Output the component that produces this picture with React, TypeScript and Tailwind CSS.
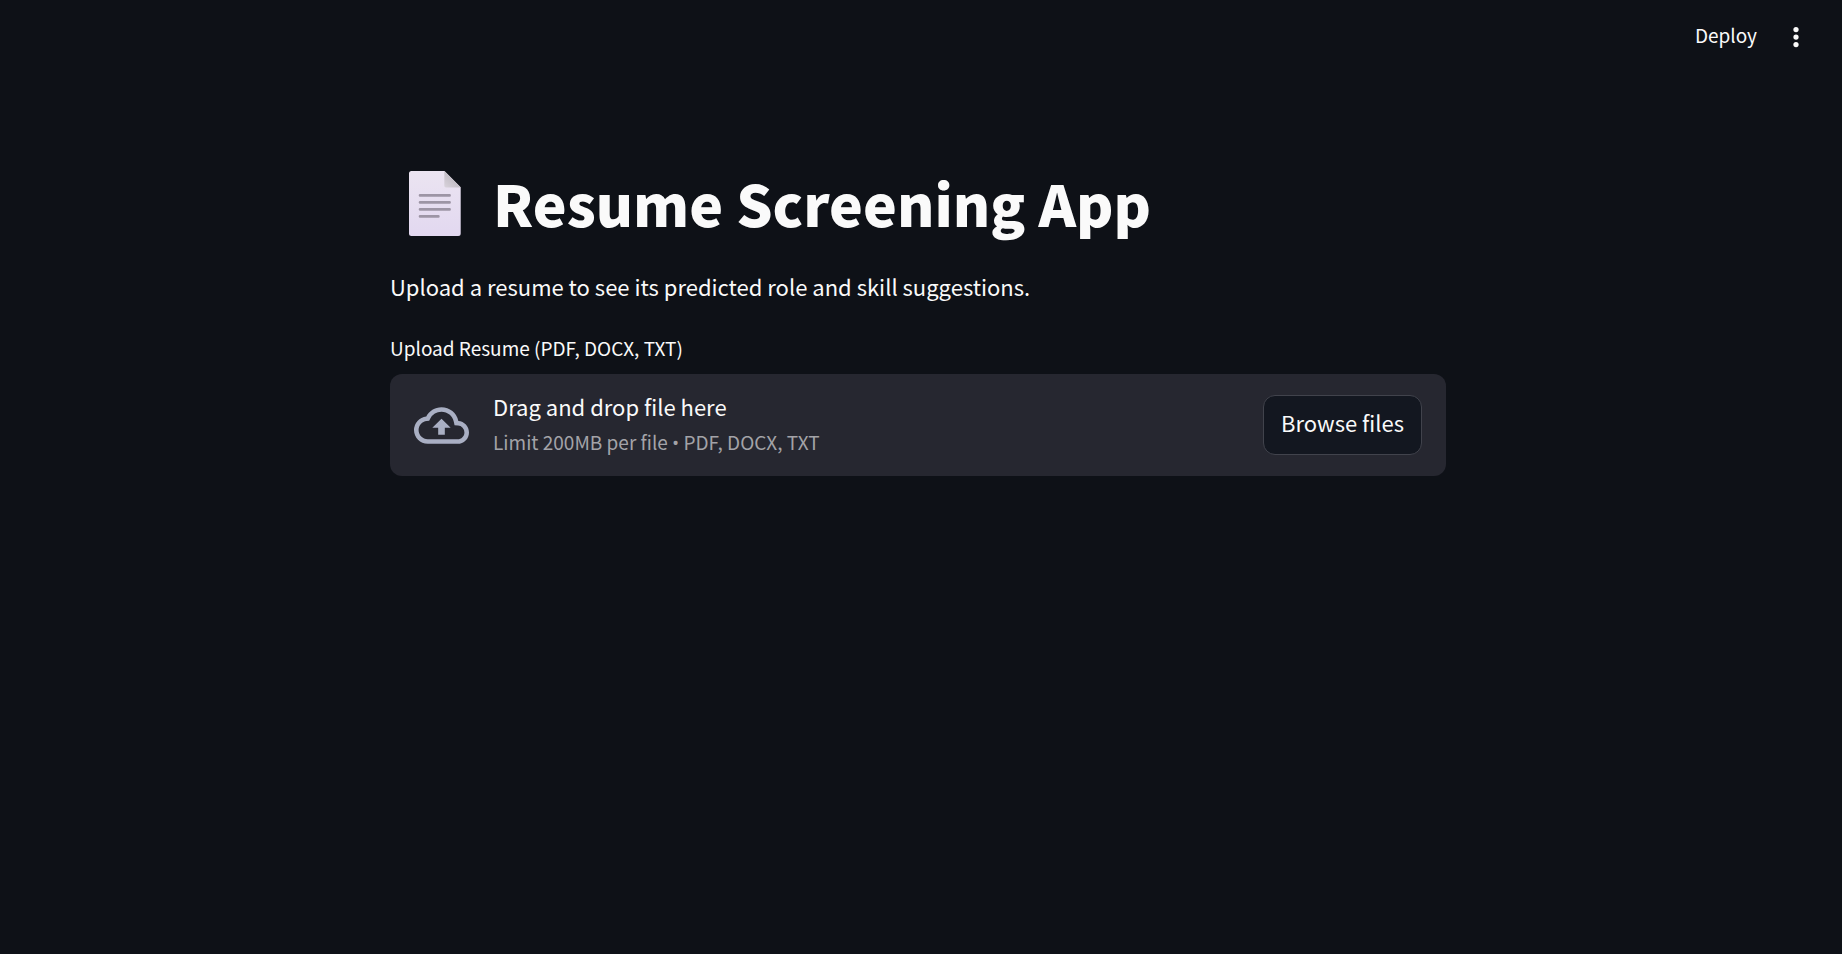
import { useRef } from "react";

function DocumentIcon() {
  return (
    <svg className="mt-1 h-[66px] w-[52px] shrink-0" viewBox="0 0 52 66" aria-hidden="true">
      <defs>
        <linearGradient id="page" x1="0" y1="0" x2="0" y2="1">
          <stop offset="0" stopColor="#ebe4f1" />
          <stop offset="1" stopColor="#e2d8f0" />
        </linearGradient>
        <linearGradient id="fold" x1="0" y1="1" x2="1" y2="0">
          <stop offset="0" stopColor="#d9d3dc" />
          <stop offset="0.6" stopColor="#bfbac2" />
        </linearGradient>
      </defs>
      <path d="M2.5 0H35.5L51.7 16.3V62.5a2.5 2.5 0 0 1-2.5 2.5H2.5A2.5 2.5 0 0 1 0 62.5V2.5a2.5 2.5 0 0 1 2.5-2.5z" fill="url(#page)" />
      <path d="M35.3 0L51.7 16.5H37a1.7 1.7 0 0 1-1.7-1.7z" fill="url(#fold)" />
      <path d="M11 24.4H40.6M11 31.4H40.6M11 38.4H40.6M11 45.4H29.4" stroke="#9d95a5" strokeWidth="2.6" strokeLinecap="round" />
    </svg>
  );
}

function CloudUploadIcon() {
  return (
    <svg className="size-[55px] shrink-0" viewBox="0 0 24 24" fill="#a9afc3" aria-hidden="true">
      <path d="M19.35 10.04A7.49 7.49 0 0 0 12 4C9.11 4 6.6 5.64 5.35 8.04A5.994 5.994 0 0 0 0 14c0 3.31 2.69 6 6 6h13c2.76 0 5-2.24 5-5 0-2.64-2.05-4.78-4.65-4.96zM19 18H6c-2.21 0-4-1.79-4-4 0-2.05 1.53-3.76 3.56-3.97l1.07-.11.5-.95A5.469 5.469 0 0 1 12 6c2.62 0 4.88 1.86 5.39 4.43l.3 1.5 1.53.11A2.98 2.98 0 0 1 22 15c0 1.65-1.35 3-3 3zM8 13h2.55v3h2.9v-3H16l-4-4z" />
    </svg>
  );
}

function Header() {
  return (
    <header className="flex h-[74px] items-center justify-end gap-6 pr-[31px]">
      <button type="button" className="pb-1 text-[19px] leading-7">
        Deploy
      </button>
      <button type="button" aria-label="Main menu">
        <svg className="size-[30px]" viewBox="0 0 24 24" fill="currentColor" aria-hidden="true">
          <circle cx="12" cy="6" r="2.1" />
          <circle cx="12" cy="12" r="2.1" />
          <circle cx="12" cy="18" r="2.1" />
        </svg>
      </button>
    </header>
  );
}

function FileUploader() {
  const input = useRef<HTMLInputElement>(null);
  return (
    <div>
      <label htmlFor="resume-file" className="block text-[19px] leading-7">
        Upload Resume (PDF, DOCX, TXT)
      </label>
      <section className="mt-3 flex items-center gap-6 rounded-xl bg-[#262730] px-6 py-4">
        <input ref={input} id="resume-file" type="file" accept=".pdf,.docx,.txt" className="hidden" />
        <CloudUploadIcon />
        <div className="min-w-0 flex-1 pb-0.5">
          <p className="text-[22px] leading-8">Drag and drop file here</p>
          <p className="mt-1 text-[19px] leading-8 text-[#a3a3a8]">
            Limit 200MB per file <span className="font-['Open_Sans',sans-serif] leading-none">•</span> PDF, DOCX, TXT
          </p>
        </div>
        <button
          type="button"
          onClick={() => input.current?.click()}
          className="h-[60px] shrink-0 rounded-xl border border-[#41434c] bg-[#131720] px-[17px] pb-1.5 text-[22px]"
        >
          Browse files
        </button>
      </section>
    </div>
  );
}

export default function App() {
  return (
    <div className="min-h-screen bg-[#0e1117] font-['Noto_Sans_CJK_SC','Noto_Sans',sans-serif] text-[#fafafa]">
      <Header />
      <main className="pt-[88px] pr-1.5">
        <div className="mx-auto max-w-[1056px]">
          <div className="flex items-center gap-8 pl-[19px]">
            <DocumentIcon />
            <h1 className="text-[57px] leading-[80px] font-black">Resume Screening App</h1>
          </div>
          <p className="mt-[26px] mb-[30px] text-[22px] leading-9">Upload a resume to see its predicted role and skill suggestions.</p>
          <FileUploader />
        </div>
      </main>
    </div>
  );
}
